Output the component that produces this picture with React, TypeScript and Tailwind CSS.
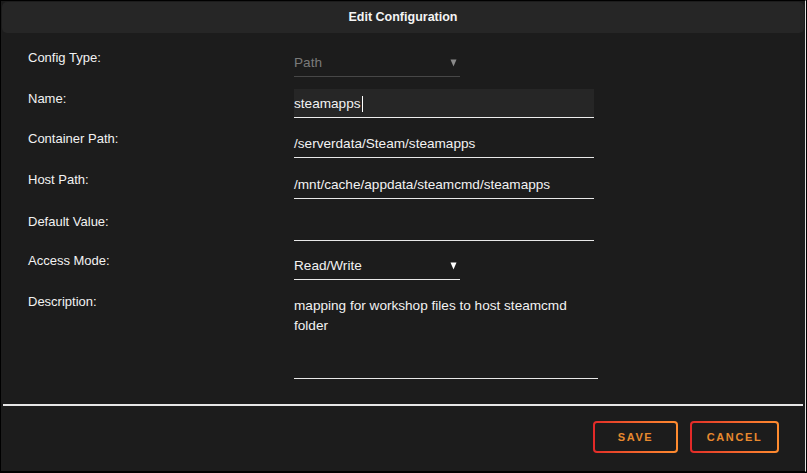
import { ReactNode } from 'react';

const font = { fontFamily: '"Liberation Sans", Arial, sans-serif' };

function Arrow({ color }: { color: string }) {
	return (
		<svg width="7" height="8" viewBox="0 0 7 8" className="shrink-0">
			<path d="M0.5 0.5 H6.5 L3.5 7.5 Z" fill={color} />
		</svg>
	);
}

interface RowProps {
	label: string;
	top: string;
	children: ReactNode;
}

function Row({ label, top, children }: RowProps) {
	return (
		<div className={`flex items-start ${top}`}>
			<div className="w-[266px] shrink-0 pt-[2px] text-[13px] leading-[15px] text-[#f2f2f2]">{label}</div>
			{children}
		</div>
	);
}

function TextField({ value, width = 'w-[300px]' }: { value?: string; width?: string }) {
	return (
		<div className={`${width} h-[29px] pt-[2px] border-b border-[#e8e8e8] flex items-center text-[13.6px] text-[#f2f2f2]`}>
			{value}
		</div>
	);
}

function GradientButton({ label, width }: { label: string; width: string }) {
	return (
		<div className="rounded-[4px] bg-gradient-to-r from-[#e22828] to-[#ff8c2f] p-[2px]">
			<div className={`h-[28px] ${width} rounded-[2px] bg-[#1c1c1c] flex items-center justify-center text-[11px] font-bold tracking-[1.6px] text-[#e8892e]`}>
				{label}
			</div>
		</div>
	);
}

export default function App() {
	return (
		<div className="w-[807px] h-[473px] bg-black overflow-hidden" style={font}>
			<div className="w-[806px] h-[472px] bg-[#1c1c1c] border border-black border-r-[#e0e0e0] flex flex-col">
				<div className="mx-[1px] mt-[1px] h-[31px] rounded-[5px] bg-[#262626] flex items-center justify-center text-[12.5px] font-bold text-[#f4f4f4]">
					Edit Configuration
				</div>

				<div className="pl-[27px] flex flex-col">
					<Row label="Config Type:" top="mt-[15px]">
						<div className="w-[166px] h-[29px] pt-[2px] border-b border-[#474747] flex items-center justify-between pr-[3px] text-[13.6px] text-[#7a7a7a]">
							<span>Path</span>
							<Arrow color="#8a8a8a" />
						</div>
					</Row>
					<Row label="Name:" top="mt-[12px]">
						<div className="w-[300px] h-[29px] pt-[2px] bg-[#262626] border-b border-[#ededed] flex items-center text-[13.6px] text-[#f2f2f2]">
							<span>steamapps</span>
							<span className="ml-[1px] w-px h-[16px] bg-white" />
						</div>
					</Row>
					<Row label="Container Path:" top="mt-[11px]">
						<TextField value="/serverdata/Steam/steamapps" />
					</Row>
					<Row label="Host Path:" top="mt-[12px]">
						<TextField value="/mnt/cache/appdata/steamcmd/steamapps" />
					</Row>
					<Row label="Default Value:" top="mt-[13px]">
						<TextField />
					</Row>
					<Row label="Access Mode:" top="mt-[10px]">
						<div className="w-[166px] h-[29px] pt-[2px] border-b border-[#e8e8e8] flex items-center justify-between pr-[3px] text-[13.6px] text-[#f2f2f2]">
							<span>Read/Write</span>
							<Arrow color="#ffffff" />
						</div>
					</Row>
					<Row label="Description:" top="mt-[12px]">
						<div className="w-[304px] h-[87px] border-b border-[#e8e8e8] pt-[4px] pr-[4px] text-[13.6px] leading-[20px] text-[#f2f2f2]">
							mapping for workshop files to host steamcmd folder
						</div>
					</Row>
				</div>

				<div className="mt-[25px] mx-[2px] h-[2px] bg-[#e6e6e6]" />

				<div className="flex justify-end gap-[12px] pr-[26px] mt-[15px]">
					<GradientButton label="SAVE" width="w-[81px]" />
					<GradientButton label="CANCEL" width="w-[85px]" />
				</div>
			</div>
		</div>
	);
}
